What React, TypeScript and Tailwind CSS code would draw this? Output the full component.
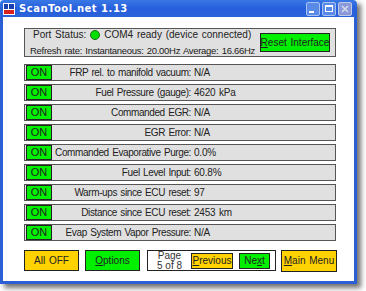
import React from "react";

const rows: [string, string][] = [
  ["FRP rel. to manifold vacuum:", "N/A"],
  ["Fuel Pressure (gauge):", "4620 kPa"],
  ["Commanded EGR:", "N/A"],
  ["EGR Error:", "N/A"],
  ["Commanded Evaporative Purge:", "0.0%"],
  ["Fuel Level Input:", "60.8%"],
  ["Warm-ups since ECU reset:", "97"],
  ["Distance since ECU reset:", "2453 km"],
  ["Evap System Vapor Pressure:", "N/A"],
];

export default function App() {
  return (
    <div
      className="w-[366px] h-[291px] bg-white relative overflow-hidden text-[#222] whitespace-nowrap"
      style={{ fontFamily: '"Liberation Sans", Arial, sans-serif' }}
    >
      <div className="w-[357px] h-[284px] flex flex-col shadow-[4px_4px_5px_rgba(0,0,0,0.55)]">
        {/* title bar */}
        <div className="h-[17px] flex items-center bg-gradient-to-b from-[#3a78e6] via-[#2660dc] to-[#2a62d8] rounded-t-[4px] pl-[3px] pr-[5px]">
          <svg width="12" height="12" viewBox="0 0 12 12" className="mr-[4px]">
            <rect x="0" y="0" width="12" height="12" fill="#ffffff" />
            <rect x="1" y="1" width="4" height="5" fill="#1a3fb0" />
            <rect x="6" y="1" width="5" height="5" fill="#1a3fb0" />
            <rect x="1" y="7" width="10" height="4" fill="#d82020" />
          </svg>
          <span className="text-white font-bold text-[10px] tracking-[0.5px] leading-none" style={{ fontFamily: '"DejaVu Sans", "Liberation Sans", sans-serif' }}>
            ScanTool.net 1.13
          </span>
          <div className="ml-auto flex gap-[2px]">
            <div className="w-[14px] h-[14px] rounded-[2px] border border-[#a8c0f0] bg-[#5a8ae8] flex items-end justify-start p-[2px]">
              <div className="w-[5px] h-[2px] bg-white" />
            </div>
            <div className="w-[14px] h-[14px] rounded-[2px] border border-[#a8c0f0] bg-[#5a8ae8] flex items-center justify-center">
              <div className="w-[8px] h-[7px] border border-white border-t-2" />
            </div>
            <div className="w-[14px] h-[14px] rounded-[2px] border border-[#c0c8e8] bg-[#8a9ad8] flex items-center justify-center">
              <svg width="8" height="8" viewBox="0 0 8 8">
                <path d="M1 1L7 7M7 1L1 7" stroke="#d8dcf0" strokeWidth="1.5" />
              </svg>
            </div>
          </div>
        </div>
        {/* body */}
        <div className="flex-1 bg-white border-x-[3px] border-b-[3px] border-[#2a5fd6] pl-[21px] pr-[17px] pt-[11px] flex flex-col text-[10px] leading-none">
          {/* port panel */}
          <div className="h-[29px] w-[312px] bg-[#e0e0e0] border border-[#555] flex items-center pl-[5px] pr-[5px]">
            <div className="flex flex-col gap-[6px] flex-1 min-w-0">
              <div className="flex items-center pl-[3px] [word-spacing:1px]">
                <span>Port Status:</span>
                <span className="inline-block w-[10px] h-[10px] rounded-full bg-[#00e000] border border-[#1a6a1a] mx-[4px]" />
                <span>COM4 ready (device connected)</span>
              </div>
              <div className="text-[9.5px] tracking-[-0.3px] [word-spacing:1px]">Refresh rate: Instantaneous: 20.00Hz Average: 16.66Hz</div>
            </div>
            <div className="shrink-0 w-[70px] h-[19px] bg-[#00f000] border border-[#222] flex items-center justify-center [word-spacing:1px]">
              <span><span className="underline">R</span>eset Interface</span>
            </div>
          </div>
          {/* rows */}
          <div className="flex flex-col gap-[3px] mt-[7px]">
            {rows.map(([label, value]) => (
              <div key={label} className="h-[17px] w-[312px] bg-[#e0e0e0] border border-[#555] flex items-center pl-[1px] [word-spacing:1px]">
                <div className="shrink-0 w-[26px] h-[15px] bg-[#00f000] border border-[#222] flex items-center justify-center text-[11px]">ON</div>
                <div className="shrink-0 w-[139px] flex justify-end">
                  <span className="tracking-[-0.4px]">{label}</span>
                </div>
                <div className="ml-[3px] tracking-[-0.2px]">{value}</div>
              </div>
            ))}
          </div>
          {/* bottom buttons */}
          <div className="flex items-start mt-[9px]">
            <div className="w-[55px] h-[21px] bg-[#ffd200] border border-[#222] flex items-center justify-center [word-spacing:1px]">All OFF</div>
            <div className="w-[55px] h-[21px] bg-[#00f000] border border-[#222] flex items-center justify-center ml-[6px]">
              <span><span className="underline">O</span>ptions</span>
            </div>
            <div className="w-[129px] h-[21px] bg-white border border-[#222] flex items-center ml-[7px] pr-[5px]">
              <div className="w-[43px] flex flex-col items-center text-[10px] leading-[10px] text-[#333]">
                <span>Page</span>
                <span>5 of 8</span>
              </div>
              <div className="w-[42px] h-[16px] bg-[#ffd200] border border-[#222] flex items-center justify-center">
                <span><span className="underline">P</span>revious</span>
              </div>
              <div className="w-[31px] h-[16px] bg-[#00f000] border border-[#222] flex items-center justify-center ml-[6px]">
                <span>Ne<span className="underline">x</span>t</span>
              </div>
            </div>
            <div className="w-[56px] h-[22px] bg-[#ffd200] border border-[#222] flex items-center justify-center ml-[5px] [word-spacing:1px]">
              <span><span className="underline">M</span>ain Menu</span>
            </div>
          </div>
        </div>
      </div>
    </div>
  );
}
